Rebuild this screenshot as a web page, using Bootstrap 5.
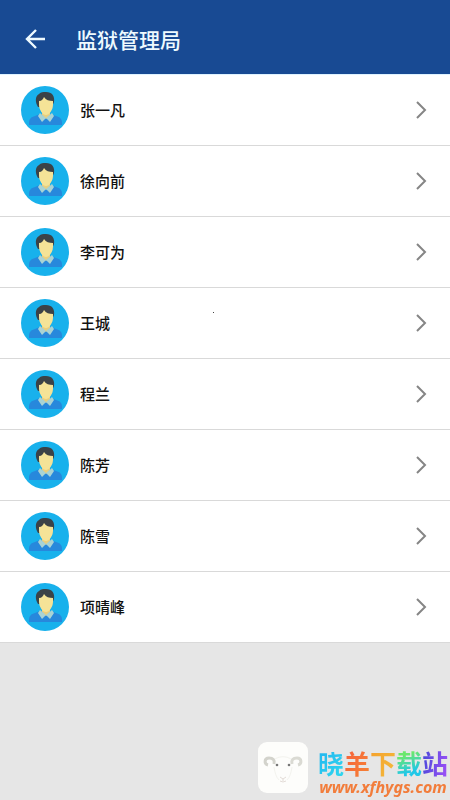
<!DOCTYPE html>
<html lang="zh-CN">
<head>
<meta charset="utf-8">
<meta name="viewport" content="width=device-width, initial-scale=1">
<title>监狱管理局</title>
<link href="https://cdn.jsdelivr.net/npm/bootstrap@5.3.0/dist/css/bootstrap.min.css" rel="stylesheet">
<style>
  body { background: #e6e6e6; font-family: "Noto Sans CJK SC", sans-serif; }
  .top-bar { background: #184a93; height: 75px; padding: 4px 24px 0; gap: 29px; border-bottom: 1px solid #dff3ff; }
  .top-bar h1 { font-size: 21px; line-height: 28px; font-weight: 500; color: #eefaff; }
  .back-btn { width: 23px; height: 24px; color: #eefaff; }
  .person { height: 71px; padding: 0 23px 0 21px; gap: 11px; border-bottom: 1px solid #d9d9d9; color: #111; font-size: 15px; line-height: 22px; font-weight: 500; }
  .person-list { position: relative; }
  .speck { position: absolute; left: 213px; top: 237px; width: 1px; height: 1px; background: #444; }
  .site-mark { right: 2px; bottom: 3px; gap: 10px; }
  .site-name { font-size: 26px; line-height: 28px; font-weight: 700; }
  .site-name span { -webkit-background-clip: text; background-clip: text; color: transparent; }
  .g1 { background-image: linear-gradient(135deg, #23b4f0, #30d8ee); }
  .g2 { background-image: linear-gradient(120deg, #f7603c, #f58434); }
  .g3 { background-image: linear-gradient(120deg, #f5a02c, #f3bb3c); }
  .g4 { background-image: linear-gradient(160deg, #6be86c 25%, #20c8e8 75%); }
  .g5 { background-image: linear-gradient(100deg, #4648d8, #a050f8); }
  .site-url { font: italic 700 16px/20px "Noto Sans", sans-serif; color: #f27d3b; }
</style>
</head>
<body>
<svg class="d-none" aria-hidden="true">
  <symbol id="avatar" viewBox="0 0 48 48">
    <circle cx="24" cy="24" r="24" fill="#18b1ec"/>
    <path d="M8 39v-2c0-4 2-6 6-7l5-2h11l5 2c4 1 6 3 6 7v2z" fill="#2788dc"/>
    <path d="M21 23h8v6l-4 4-4-4z" fill="#e9cf7e"/>
    <path d="M19 27l6 5-4 4-4-6zM31 27l-6 5 4 4 4-6z" fill="#a9d3d4"/>
    <path d="M17 21c-3-5-3-11 1-13 2-2 4-2 7-2 6 0 9 4 8 10l-2 5z" fill="#3b4247"/>
    <path d="M18 15c3 0 4-2 5-4 2 3 5 4 9 4v4c0 5-4 10-7 10s-7-5-7-10z" fill="#f5e397"/>
  </symbol>
  <symbol id="chevron" viewBox="0 0 12 18">
    <path d="M2 1l8 8-8 8" fill="none" stroke="#858585" stroke-width="2"/>
  </symbol>
</svg>

<header class="top-bar d-flex align-items-center">
  <button type="button" class="back-btn btn p-0 border-0 d-flex align-items-center" aria-label="返回">
    <svg width="23" height="22" viewBox="0 0 23 22" fill="none" stroke="currentColor" stroke-width="2.4"><path d="M21 11H3M12 2l-9 9 9 9"/></svg>
  </button>
  <h1 class="m-0">监狱管理局</h1>
</header>

<main class="person-list bg-white">
  <a href="#" class="person d-flex align-items-center text-decoration-none"><svg width="48" height="48"><use href="#avatar"/></svg><span class="flex-grow-1">张一凡</span><svg width="12" height="18"><use href="#chevron"/></svg></a>
  <a href="#" class="person d-flex align-items-center text-decoration-none"><svg width="48" height="48"><use href="#avatar"/></svg><span class="flex-grow-1">徐向前</span><svg width="12" height="18"><use href="#chevron"/></svg></a>
  <a href="#" class="person d-flex align-items-center text-decoration-none"><svg width="48" height="48"><use href="#avatar"/></svg><span class="flex-grow-1">李可为</span><svg width="12" height="18"><use href="#chevron"/></svg></a>
  <a href="#" class="person d-flex align-items-center text-decoration-none"><svg width="48" height="48"><use href="#avatar"/></svg><span class="flex-grow-1">王城</span><svg width="12" height="18"><use href="#chevron"/></svg></a>
  <a href="#" class="person d-flex align-items-center text-decoration-none"><svg width="48" height="48"><use href="#avatar"/></svg><span class="flex-grow-1">程兰</span><svg width="12" height="18"><use href="#chevron"/></svg></a>
  <a href="#" class="person d-flex align-items-center text-decoration-none"><svg width="48" height="48"><use href="#avatar"/></svg><span class="flex-grow-1">陈芳</span><svg width="12" height="18"><use href="#chevron"/></svg></a>
  <a href="#" class="person d-flex align-items-center text-decoration-none"><svg width="48" height="48"><use href="#avatar"/></svg><span class="flex-grow-1">陈雪</span><svg width="12" height="18"><use href="#chevron"/></svg></a>
  <a href="#" class="person d-flex align-items-center text-decoration-none"><svg width="48" height="48"><use href="#avatar"/></svg><span class="flex-grow-1">项晴峰</span><svg width="12" height="18"><use href="#chevron"/></svg></a>
  <span class="speck"></span>
</main>

<aside class="site-mark position-fixed d-flex align-items-end">
  <svg class="mb-1" width="50" height="51" viewBox="0 0 50 51" fill="none" aria-hidden="true">
    <rect width="50" height="51" rx="9" fill="#fdfdfb"/>
    <path d="M16 22c1-4-1-6-5-6-5 0-5 6-1 7" stroke="#d3d3cc" stroke-width="3"/>
    <path d="M34 22c-1-4 1-6 5-6 5 0 5 6 1 7" stroke="#dadad3" stroke-width="3"/>
    <path d="M16 25c1 6 2 10 5 13M34 25c-1 6-2 10-5 13M17 17c5-3 11-3 16 0" stroke="#f3f3ee"/>
    <circle cx="19" cy="23" r="1.3" fill="#777"/><circle cx="31" cy="23" r="1.3" fill="#777"/>
    <path d="M22 35l3 2 3-2M25 37v2M22 39q3 2 6 0" stroke="#e3dcd7"/>
  </svg>
  <div class="text-center">
    <div class="site-name d-flex"><span class="g1">晓</span><span class="g2">羊</span><span class="g3">下</span><span class="g4">载</span><span class="g5">站</span></div>
    <a href="#" class="site-url d-block text-decoration-none">www.xfhygs.com</a>
  </div>
</aside>
<script src="https://cdn.jsdelivr.net/npm/bootstrap@5.3.0/dist/js/bootstrap.bundle.min.js"></script>
</body>
</html>
